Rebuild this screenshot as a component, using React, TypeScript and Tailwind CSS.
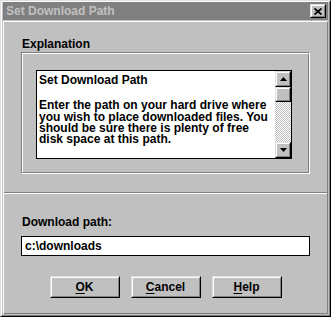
import type { ReactNode } from "react";

// Win95-style "Set Download Path" dialog, inactive title bar.

function Raised({ className = "", children }: { className?: string; children?: ReactNode }) {
  return (
    <div className={`border border-t-[#dfdfdf] border-l-[#dfdfdf] border-r-black border-b-black ${className}`}>
      <div className="flex h-full w-full items-center justify-center border border-t-white border-l-white border-r-[#808080] border-b-[#808080] bg-[#c0c0c0]">
        {children}
      </div>
    </div>
  );
}

function Arrow({ down = false }: { down?: boolean }) {
  return (
    <svg width="7" height="4" viewBox="0 0 7 4" className="block">
      <path d={down ? "M0 0H7L3.5 4Z" : "M0 4H7L3.5 0Z"} fill="#000" />
    </svg>
  );
}

function Button({ hot, rest }: { hot: string; rest: string }) {
  return (
    <Raised className="h-[22px] w-[70px]">
      <span className="text-[12px] leading-[14px] font-bold text-black">
        <span className="underline underline-offset-[2px]">{hot}</span>
        {rest}
      </span>
    </Raised>
  );
}

export default function App() {
  return (
    <div className="h-[317px] w-[331px] bg-[#c0c0c0] font-['Liberation_Sans',Arial,sans-serif] text-black">
      {/* window frame */}
      <div className="flex h-full w-full flex-col border border-t-[#dfdfdf] border-l-[#dfdfdf] border-r-black border-b-black">
        <div className="flex h-full w-full flex-col border border-t-white border-l-white border-r-[#808080] border-b-[#808080] px-[1px] pb-[1px]">
          {/* title bar (inactive) */}
          <div className="flex h-[18px] items-center justify-between bg-[#808080] pl-[3px] pr-[2px]">
            <span className="text-[12px] leading-[18px] font-bold text-[#c0c0c0]">Set Download Path</span>
            <Raised className="h-[14px] w-[16px]">
              <svg width="8" height="7" viewBox="0 0 8 7" className="block">
                <path d="M0.5 0.5L7.5 6.5M7.5 0.5L0.5 6.5" stroke="#000" strokeWidth="1.8" />
              </svg>
            </Raised>
          </div>

          {/* client panel */}
          <div className="mt-[1px] flex flex-1 flex-col border border-t-white border-l-white border-r-[#808080] border-b-[#808080]">
            <div className="border-b border-b-[#808080] px-[17px] pt-[15px] pb-[18px]">
              <div className="pl-[1px] text-[12px] leading-[14px] font-bold">Explanation</div>
              <div className="mt-[1px] border border-t-[#808080] border-l-[#808080] border-r-white border-b-white">
                <div className="h-[120px] border border-t-white border-l-white border-r-[#808080] border-b-[#808080] pt-[16px] pl-[13px]">
                  <div className="flex h-[89px] w-[256px] border border-black bg-white">
                    <div className="flex-1 pt-[4px] pl-[2px] text-[12px] leading-[11.3px] font-bold whitespace-nowrap">
                      <div>Set Download Path</div>
                      <div className="mt-[14px]">
                        Enter the path on your hard drive where
                        <br />
                        you wish to place downloaded files. You
                        <br />
                        should be sure there is plenty of free
                        <br />
                        disk space at this path.
                      </div>
                    </div>
                    {/* scrollbar */}
                    <div className="flex w-[16px] flex-col">
                      <Raised className="h-[16px] w-[16px]">
                        <Arrow />
                      </Raised>
                      <Raised className="h-[15px] w-[16px]" />
                      <div className="flex-1 bg-[image:repeating-conic-gradient(#c0c0c0_0_25%,#ffffff_0_50%)] bg-[length:2px_2px]" />
                      <Raised className="h-[16px] w-[16px]">
                        <Arrow down />
                      </Raised>
                    </div>
                  </div>
                </div>
              </div>
            </div>

            <div className="flex flex-1 flex-col border-t border-t-white px-[17px] pt-[21px]">
              <div className="pl-[1px] text-[12px] leading-[14px] font-bold">Download path:</div>
              <div className="mt-[7px] flex h-[20px] items-center border border-black bg-white pl-[3px]">
                <span className="text-[12px] leading-[14px] font-bold">c:\downloads</span>
              </div>
              <div className="mt-[20px] flex justify-center gap-[11px]">
                <Button hot="O" rest="K" />
                <Button hot="C" rest="ancel" />
                <Button hot="H" rest="elp" />
              </div>
            </div>
          </div>
        </div>
      </div>
    </div>
  );
}
